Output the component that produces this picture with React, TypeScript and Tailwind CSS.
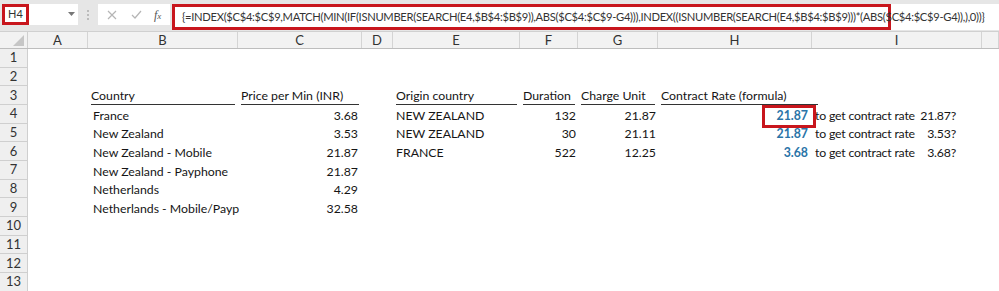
import React from 'react';

const colW = ['w-[60px]', 'w-[150px]', 'w-[124px]', 'w-[31px]', 'w-[127px]', 'w-[58px]', 'w-[80px]', 'w-[154px]', 'w-[170px]', 'flex-1'];
const colNames = ['A', 'B', 'C', 'D', 'E', 'F', 'G', 'H', 'I', ''];

const formula =
  '{=INDEX($C$4:$C$9,MATCH(MIN(IF(ISNUMBER(SEARCH(E4,$B$4:$B$9)),ABS($C$4:$C$9-G4))),INDEX((ISNUMBER(SEARCH(E4,$B$4:$B$9)))*(ABS($C$4:$C$9-G4)),),0))}';

const left = [
  ['France', '3.68'],
  ['New Zealand', '3.53'],
  ['New Zealand - Mobile', '21.87'],
  ['New Zealand - Payphone', '21.87'],
  ['Netherlands', '4.29'],
  ['Netherlands - Mobile/Payp', '32.58'],
];

const right = [
  ['NEW ZEALAND', '132', '21.87', '21.87', '21.87?'],
  ['NEW ZEALAND', '30', '21.11', '21.87', '3.53?'],
  ['FRANCE', '522', '12.25', '3.68', '3.68?'],
];

const Underlined = ({ text }: { text: string }) => (
  <div className="mx-[3px] w-full border-b border-[#333] leading-[16px] whitespace-nowrap">{text}</div>
);

const App: React.FC = () => {
  const rows: React.ReactNode[][] = [];
  for (let r = 1; r <= 13; r++) {
    const cells: React.ReactNode[] = Array(10).fill(null);
    if (r === 3) {
      cells[1] = <Underlined text="Country" />;
      cells[2] = <Underlined text="Price per Min (INR)" />;
      cells[4] = <Underlined text="Origin country" />;
      cells[5] = <Underlined text="Duration" />;
      cells[6] = <Underlined text="Charge Unit" />;
      cells[7] = (
        <div className="ml-[3px] w-[157px] shrink-0 border-b border-[#333] leading-[16px] whitespace-nowrap">
          Contract Rate (formula)
        </div>
      );
    }
    if (r >= 4 && r <= 9) {
      const [name, price] = left[r - 4];
      cells[1] = <div className="pl-[5px] whitespace-nowrap">{name}</div>;
      cells[2] = <div className="w-full pr-[4px] text-right">{price}</div>;
    }
    if (r >= 4 && r <= 6) {
      const [origin, dur, unit, rate, q] = right[r - 4];
      cells[4] = <div className="pl-[3px] whitespace-nowrap">{origin}</div>;
      cells[5] = <div className="w-full pr-[2px] text-right">{dur}</div>;
      cells[6] = <div className="w-full pr-[2px] text-right">{unit}</div>;
      cells[7] = (
        <div className="relative w-full pr-[4px] text-right font-bold text-[#2a74a8]">
          {rate}
          {r === 4 && (
            <div className="absolute left-[104px] top-[-2px] h-[23px] w-[54px] border-[3px] border-[#c8161d]" />
          )}
        </div>
      );
      cells[8] = (
        <div className="flex w-[144px] shrink-0 justify-between gap-[5px] pl-[3px] tracking-[-0.2px] whitespace-nowrap">
          <span>to get contract rate</span>
          <span>{q}</span>
        </div>
      );
    }
    rows.push(cells);
  }

  return (
    <div className="h-[291px] w-[999px] overflow-hidden bg-white font-['Lato',sans-serif] text-[12.3px] text-[#151515]">
      {/* formula bar */}
      <div className="flex h-[32px] items-start border-b border-[#d0d0d0] bg-[#e6e6e6] pt-[4px]">
        <div className="relative ml-[2px] flex h-[21px] w-[76px] items-center bg-white">
          <div className="absolute left-0 top-0 flex h-[21px] w-[27px] items-center justify-center border-[3px] border-[#c8161d] text-[11px] text-[#333]">
            H4
          </div>
          <svg className="absolute left-[66px] top-[8px]" width="7" height="4" viewBox="0 0 7 4">
            <path d="M0 0h7L3.5 4z" fill="#777" />
          </svg>
        </div>
        <div className="flex h-[21px] w-[20px] flex-col items-center justify-center gap-[2px]">
          <span className="h-[2px] w-[2px] bg-[#bbb]" />
          <span className="h-[2px] w-[2px] bg-[#bbb]" />
          <span className="h-[2px] w-[2px] bg-[#bbb]" />
        </div>
        <div className="flex h-[21px] w-[72px] items-center bg-white">
          <svg className="ml-[9px]" width="10" height="10" viewBox="0 0 10 10">
            <path d="M1 1l8 8M9 1l-8 8" stroke="#b5b5b5" strokeWidth="1.2" />
          </svg>
          <svg className="ml-[14px]" width="11" height="9" viewBox="0 0 11 9">
            <path d="M1 5l3 3 6-7" stroke="#b5b5b5" strokeWidth="1.2" fill="none" />
          </svg>
          <span className="ml-[12px] font-['Liberation_Serif',serif] text-[12px] italic text-[#555]">
            f<span className="text-[9px]">x</span>
          </span>
        </div>
        <div className="relative ml-[2px] flex h-[26px] flex-1 items-center bg-white">
          <div className="flex h-[26px] w-[719px] shrink-0 items-center border-[3px] border-[#c8161d] pl-[7px] text-[11.2px] tracking-[-0.3px] text-[#333] whitespace-nowrap">
            {formula}
          </div>
        </div>
      </div>

      {/* column headers */}
      <div className="flex h-[17px] border-b border-[#bdbdbd] bg-[#f2f2f2] text-[13px] text-[#333]">
        <div className="relative w-[28px] shrink-0 border-r border-[#cfcfcf]">
          <svg className="absolute right-[3px] bottom-[2px]" width="11" height="11" viewBox="0 0 11 11">
            <path d="M11 0v11H0z" fill="#c6c6c6" />
          </svg>
        </div>
        {colNames.map((c, i) => (
          <div key={i} className={`${colW[i]} flex shrink-0 items-center justify-center border-r border-[#d4d4d4] leading-none`}>
            {c}
          </div>
        ))}
      </div>

      {/* rows */}
      {rows.map((cells, ri) => (
        <div key={ri} className="flex h-[18.67px]">
          <div className="flex w-[28px] shrink-0 items-center justify-center border-r border-b border-[#cfcfcf] bg-[#efefef] text-[13px] leading-none text-[#333]">
            {ri + 1}
          </div>
          {cells.map((c, i) => (
            <div key={i} className={`${colW[i]} flex shrink-0 items-end leading-[17px]`}>
              {c}
            </div>
          ))}
        </div>
      ))}
    </div>
  );
};

export default App;
